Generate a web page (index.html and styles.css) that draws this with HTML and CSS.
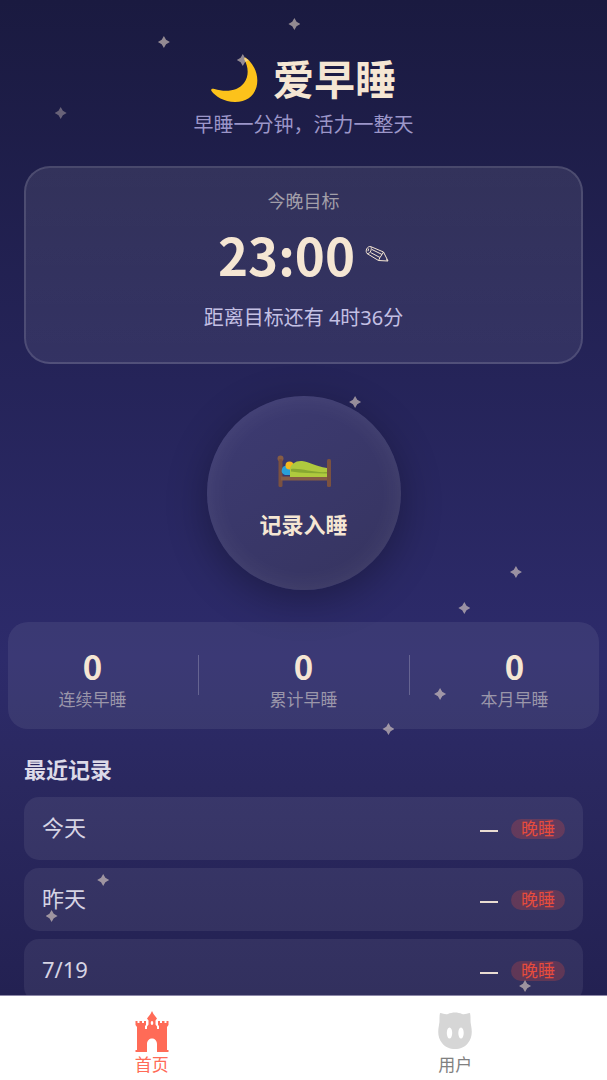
FILE: index.html
```
<!DOCTYPE html>
<html lang="zh-CN">
<head>
    <meta charset="UTF-8">
    <meta name="viewport" content="width=device-width, initial-scale=1.0">
    <title>爱早睡</title>
    <link rel="stylesheet" href="styles.css">
</head>
<body>
    <main class="page">
        <header class="header">
            <h1 class="title">
                <svg class="moon" viewBox="0 0 48 48" aria-hidden="true">
                    <path d="M34.500 2.500 C53 16 50 47 24 47 C13 47 4 41 0.500 36 C-0.500 34 1 33.300 3.500 34 C15 37.500 27 36 33 28 C39 20 36.500 10 33.500 5 C32.800 3.500 33.500 2 34.500 2.500 Z" fill="#fcc21b"/>
                </svg>
                <span>爱早睡</span>
            </h1>
            <p class="subtitle">早睡一分钟，活力一整天</p>
        </header>

        <section class="target-card">
            <p class="target-label">今晚目标</p>
            <div class="target-time">
                <span>23:00</span>
                <button class="edit-button" aria-label="修改目标">
                    <svg viewBox="0 0 24 18" fill="none" stroke="currentColor" stroke-linejoin="round" aria-hidden="true">
                        <path d="M5.500 1.500 L18.500 7 L23 16 L13.500 15.500 L2 8.500 C0 6 2 1.200 5.500 1.500 Z"/>
                        <path d="M5.500 1.500 C7.500 3.500 5.500 9 2 8.500 M7 4.500 L17 9.500 M5.500 7.500 L15 12.500 M18.500 7 L17 9.500 L15 12.500 L13.500 15.500"/>
                        <path d="M3.600 3.600 L3 6.200 M21 14.500 L22.500 15.500"/>
                    </svg>
                </button>
            </div>
            <p class="target-remain">距离目标还有 4时36分</p>
        </section>

        <button class="sleep-button">
            <svg class="bed" viewBox="0 0 54 32" aria-hidden="true">
                <circle cx="3.500" cy="3.500" r="3" fill="#855c45"/>
                <rect x="1.500" y="4" width="4" height="28" rx="1.500" fill="#7b5140"/>
                <rect x="4" y="21.500" width="47" height="4" fill="#855c45"/>
                <path d="M5 14 C6 10 11 10 14 13 V20 H8 C5 19 4 17 5 14 Z" fill="#29a0d8"/>
                <circle cx="12.500" cy="10.500" r="4" fill="#f5b81f"/>
                <path d="M13 15 C13 9 19 5.500 25 6 C33 7 38 11 50 13 V22 H13 Z" fill="#afc93e"/>
                <path d="M14 14 C25 13 36 18 50 17 V18.500 C36 18 24 18 14 16.500 Z" fill="#88a731"/>
                <rect x="50" y="4" width="4" height="28" rx="1.500" fill="#7b5140"/>
            </svg>
            <span>记录入睡</span>
        </button>

        <section class="stats">
            <div class="stat"><strong>0</strong><span>连续早睡</span></div>
            <div class="stat"><strong>0</strong><span>累计早睡</span></div>
            <div class="stat"><strong>0</strong><span>本月早睡</span></div>
        </section>

        <section class="records">
            <h2>最近记录</h2>
            <ul>
                <li><span class="day">今天</span><span class="dash"></span><span class="tag">晚睡</span></li>
                <li><span class="day">昨天</span><span class="dash"></span><span class="tag">晚睡</span></li>
                <li><span class="day">7/19</span><span class="dash"></span><span class="tag">晚睡</span></li>
            </ul>
        </section>

        <div class="stars" aria-hidden="true">
            <i></i><i></i><i></i><i></i><i></i><i></i>
            <i></i><i></i><i></i><i></i><i></i><i></i>
        </div>
    </main>

    <nav class="tabbar">
        <a class="tab active" href="#home">
            <svg viewBox="0 0 34 42" fill="currentColor" aria-hidden="true">
                <path d="M17 0 L18.500 3 L22 7.500 L20.500 9.500 V13.500 L22 15.500 V18 H24 V15 L23 14 V10 H25 V12 H27 V10 H29.500 V12 H31.500 V10 H33.500 V14 L32 16 V39 H33.500 V41 H22 V33 C22 25.500 12 25.500 12 33 V41 H0.500 V39 H2 V16 L0.500 14 V10 H2.500 V12 H4.500 V10 H7 V12 H9 V10 H11 V14 L10 15 V18 H12 V15.500 L13.500 13.500 V9.500 L12 7.500 L15.500 3 Z"/>
                <ellipse cx="17" cy="12" rx="1.300" ry="2" fill="#fff"/>
            </svg>
            <span>首页</span>
        </a>
        <a class="tab" href="#user">
            <svg viewBox="0 0 34 42" aria-hidden="true">
                <path d="M2 2 C5 2 7 4 10 3 C14 1 20 1 24 3 C27 4 29 2 32 2 C33 6 32 10 33 14 C34.500 21 34 27 30 32 C24 40 10 40 4 32 C0 27 -0.500 21 1 14 C2 10 1 6 2 2 Z" fill="#d6d6d6"/>
                <ellipse cx="11.500" cy="22" rx="2.700" ry="5.500" fill="#fff"/>
                <ellipse cx="23" cy="22" rx="2.700" ry="5.500" fill="#fff"/>
            </svg>
            <span>用户</span>
        </a>
    </nav>
</body>
</html>
```

FILE: styles.css
```
* {
    box-sizing: border-box;
    margin: 0;
    padding: 0;
}
body {
    display: flex;
    flex-direction: column;
    height: 100vh;
    font-family: "Noto Sans", "Noto Sans CJK SC", sans-serif;
    color: #f5e6d3;
}
button {
    border: none;
    background: none;
    color: inherit;
    font-family: inherit;
    cursor: pointer;
}
.page {
    position: relative;
    flex: 1;
    min-height: 0;
    overflow: hidden;
    background: linear-gradient(180deg, #1a1a40 0%, #2d2b6b 66%, #2a285f 79%, #232152 100%);
}

/* header */
.header {
    padding-top: 51px;
    text-align: center;
}
.title {
    display: flex;
    justify-content: center;
    align-items: center;
    gap: 14px;
    font-size: 41px;
    line-height: 56px;
}
.moon {
    width: 48px;
    height: 48px;
}
.subtitle {
    margin-top: 4px;
    font-size: 20px;
    line-height: 28px;
    color: #9c96c8;
}

/* target */
.target-card {
    margin: 27px 24px 0;
    padding: 20px 20px 30px;
    border: 2px solid rgba(255, 255, 255, 0.13);
    border-radius: 26px;
    background: linear-gradient(180deg, rgba(255, 255, 255, 0.09), rgba(255, 255, 255, 0.07));
    text-align: center;
}
.target-label {
    font-size: 18px;
    line-height: 26px;
    color: #a29fa9;
}
.target-time {
    display: flex;
    justify-content: center;
    align-items: center;
    gap: 10px;
    margin-top: 5px;
    font-family: "Noto Sans CJK SC", sans-serif;
    font-size: 51px;
    font-weight: bold;
    line-height: 70px;
}
.edit-button {
    width: 24px;
    height: 18px;
}
.edit-button svg {
    display: block;
    width: 24px;
    height: 18px;
}
.target-remain {
    margin-top: 15px;
    font-size: 20px;
    line-height: 28px;
    color: #c4c0e4;
}

/* sleep button */
.sleep-button {
    display: flex;
    flex-direction: column;
    justify-content: center;
    align-items: center;
    gap: 22px;
    width: 194px;
    height: 194px;
    margin: 32px auto 0;
    padding-top: 8px;
    border-radius: 50%;
    background: linear-gradient(145deg, #3d3b73, #36345f);
    box-shadow: 0 10px 40px rgba(0, 0, 0, 0.3), inset 0 0 26px rgba(255, 255, 255, 0.08);
    font-size: 22px;
    font-weight: bold;
    line-height: 30px;
}
.bed {
    width: 54px;
    height: 32px;
}

/* stats */
.stats {
    display: flex;
    gap: 74px;
    margin: 32px 8px 0;
    padding: 23px 16px 16px;
    border-radius: 20px;
    background: rgba(255, 255, 255, 0.07);
}
.stat {
    position: relative;
    flex: 1;
    display: flex;
    flex-direction: column;
    align-items: center;
}
.stat + .stat::before {
    content: "";
    position: absolute;
    left: -37px;
    top: 10px;
    width: 1px;
    height: 40px;
    background: rgba(255, 255, 255, 0.22);
}
.stat strong {
    font-family: "Noto Sans CJK SC", sans-serif;
    font-size: 33px;
    line-height: 42px;
}
.stat span {
    font-size: 17px;
    line-height: 26px;
    color: #9a96aa;
}

/* records */
.records {
    padding: 24px 24px 0;
}
.records h2 {
    font-size: 22px;
    line-height: 32px;
    color: #dcdae8;
}
.records ul {
    display: flex;
    flex-direction: column;
    gap: 8px;
    margin-top: 12px;
    list-style: none;
}
.records li {
    display: flex;
    align-items: center;
    height: 63px;
    padding: 0 18px;
    border-radius: 15px;
    background: rgba(255, 255, 255, 0.07);
}
.day {
    flex: 1;
    padding-bottom: 3px;
    font-size: 22px;
    line-height: 30px;
    color: #d6d4e4;
}
.dash {
    width: 18px;
    height: 2px;
    margin-top: 4px;
    margin-right: 13px;
    background: #e9dcd2;
}
.tag {
    padding: 0 10px;
    border-radius: 10px;
    background: rgba(231, 76, 60, 0.25);
    font-size: 17px;
    line-height: 20px;
    color: #e74c3c;
}

/* stars */
.stars {
    position: absolute;
    inset: 0;
    pointer-events: none;
}
.stars i {
    position: absolute;
    width: 12px;
    height: 12px;
    margin: -6px;
    background: #f5e6d3;
    opacity: 0.55;
    clip-path: polygon(50% 0, 68% 32%, 100% 50%, 68% 68%, 50% 100%, 32% 68%, 0 50%, 32% 32%);
}
.stars i:nth-child(1) { left: 27%; top: 42px; }
.stars i:nth-child(2) { left: 48.5%; top: 24px; }
.stars i:nth-child(3) { left: 40%; top: 60px; }
.stars i:nth-child(4) { left: 10%; top: 113px; opacity: 0.35; }
.stars i:nth-child(5) { left: 58.5%; top: 402px; }
.stars i:nth-child(6) { left: 85%; top: 572px; }
.stars i:nth-child(7) { left: 76.5%; top: 608px; }
.stars i:nth-child(8) { left: 72.5%; top: 694px; }
.stars i:nth-child(9) { left: 64%; top: 729px; }
.stars i:nth-child(10) { left: 17%; top: 880px; }
.stars i:nth-child(11) { left: 8.5%; top: 916px; }
.stars i:nth-child(12) { left: 86.5%; top: 986px; }

/* tab bar */
.tabbar {
    display: flex;
    height: 85px;
    border-top: 1px solid #8d88a8;
    background: #fff;
}
.tab {
    flex: 1;
    display: flex;
    flex-direction: column;
    align-items: center;
    padding-top: 15px;
    font-size: 17px;
    line-height: 23px;
    color: #808080;
    text-decoration: none;
}
.tab.active {
    color: #ff6b57;
}
.tab svg {
    width: 34px;
    height: 42px;
}
```
